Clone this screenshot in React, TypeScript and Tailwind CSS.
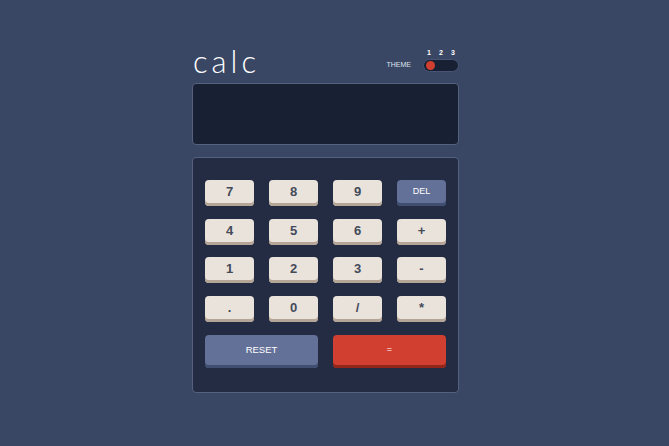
const keys: { label: string; kind?: "del" }[] = [
  { label: "7" },
  { label: "8" },
  { label: "9" },
  { label: "DEL", kind: "del" },
  { label: "4" },
  { label: "5" },
  { label: "6" },
  { label: "+" },
  { label: "1" },
  { label: "2" },
  { label: "3" },
  { label: "-" },
  { label: "." },
  { label: "0" },
  { label: "/" },
  { label: "*" },
];

export default function App() {
  return (
    <div className="min-h-[446px] w-full bg-[#3a4764] font-['Liberation_Sans',Arial,sans-serif]">
      <div className="flex w-[651px] justify-center pt-[46px]">
        <div className="w-[267px]">
          {/* header */}
          <div className="flex h-[37px] items-start justify-between">
            <h1 className="pl-[1px] font-['Lato',sans-serif] text-[31px] leading-[31px] font-light tracking-[4px] text-white">
              calc
            </h1>
            <div className="mt-[3px] flex items-end gap-[12px]">
              <span className="mb-[3px] text-[7px] leading-[8px] text-[#dfe3ee]">THEME</span>
              <div className="flex flex-col items-center">
                <div className="mb-[2px] flex w-[36px] justify-between px-[4px] text-[7px] leading-[8px] font-bold text-white">
                  <span>1</span>
                  <span>2</span>
                  <span>3</span>
                </div>
                <div className="flex h-[13px] w-[36px] items-center rounded-full border border-[#4a5575] bg-[#182034] px-[2px]">
                  <div className="h-[9px] w-[9px] rounded-full bg-[#d03f2f]" />
                </div>
              </div>
            </div>
          </div>

          {/* screen */}
          <div className="h-[62px] rounded-[4px] border border-[#56617f] bg-[#182034]" />

          {/* keypad */}
          <div className="mt-[12px] rounded-[4px] border border-[#56617f] bg-[#232c43] px-[12px] pt-[22px] pb-[24px]">
            <div className="grid grid-cols-4 gap-x-[15px] gap-y-[12.5px]">
              {keys.map((k) =>
                k.kind === "del" ? (
                  <div
                    key={k.label}
                    className="flex h-[26px] items-center justify-center rounded-[4px] bg-[#637097] pb-[2px] text-[9px] text-white shadow-[inset_0_-3px_0_#404e72]"
                  >
                    {k.label}
                  </div>
                ) : (
                  <div
                    key={k.label}
                    className="flex h-[26px] items-center justify-center rounded-[4px] bg-[#eae3dc] pb-[2px] text-[13px] font-bold text-[#434a59] shadow-[inset_0_-3px_0_#b4a597]"
                  >
                    {k.label}
                  </div>
                ),
              )}
            </div>
            <div className="mt-[13px] grid grid-cols-2 gap-x-[15px]">
              <div className="flex h-[33px] items-center justify-center rounded-[4px] bg-[#637097] pb-[2px] text-[9.5px] text-white shadow-[inset_0_-3px_0_#404e72]">
                RESET
              </div>
              <div className="flex h-[33px] items-center justify-center rounded-[4px] bg-[#d03f2f] pb-[2px] text-[9px] text-white shadow-[inset_0_-3px_0_#93261a]">
                =
              </div>
            </div>
          </div>
        </div>
      </div>
    </div>
  );
}
